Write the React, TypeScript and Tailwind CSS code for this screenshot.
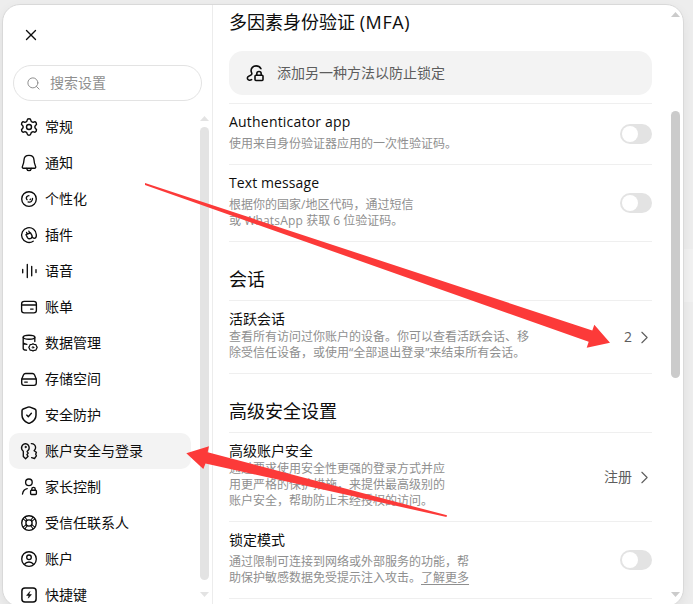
import type { ReactNode } from "react";
import { ChevronRight, Search, Settings, X } from "lucide-react";

type NavItem = {
  label: string;
  icon: ReactNode;
  active?: boolean;
};

function Glyph({ children }: { children: ReactNode }) {
  return (
    <svg
      viewBox="0 0 18 18"
      width={18}
      height={18}
      fill="none"
      stroke="currentColor"
      strokeWidth={1.35}
      strokeLinecap="round"
      strokeLinejoin="round"
      className="shrink-0"
    >
      {children}
    </svg>
  );
}

const BellIcon = () => (
  <Glyph>
    <path d="M9 1.3C6 1.3 4.1 3.4 4 6.1c-.1 2.7-.7 4.400-1.600 6.400-.4.9.1 1.700 1 1.700h11.200c.9 0 1.400-.8 1-1.700-.9-2-1.500-3.700-1.600-6.400C13.900 3.400 12 1.300 9 1.300Z" />
    <path d="M6.500 14.400c.3 1.400 1.200 2.200 2.500 2.200s2.200-.8 2.500-2.200" />
  </Glyph>
);

const PersonalizeIcon = () => (
  <Glyph>
    <circle cx="9" cy="9" r="7.3" />
    <path d="M8.900 5.700C7 5.900 6 7.200 6.400 8.700c.1.500.4.800.7 1" />
    <path d="M12.500 8.400c.2 2.700-2 4.400-4.400 3.500M10.500 9.100l-.4.500" />
  </Glyph>
);

const PluginIcon = () => (
  <Glyph>
    <path d="M13.200 15.200A7.400 7.400 0 1 1 16.400 9c0 2.100-.8 3.300-2.200 3.300-.9 0-1.500-.4-1.900-1.100" />
    <path d="M6 8.700 10.500 6.800l1.400 2.500c.5 1.300.1 2.500-1 3.100-1.200.6-2.700.3-3.400-.8L6 8.700ZM7.200 8 6.600 6.400M9.600 6.900 8.900 5.200" />
  </Glyph>
);

const VoiceIcon = () => (
  <Glyph>
    <path d="M2.700 7.400v3.400M7.300 2.500v13M11.700 4.500v9.200M16 7.600v2.900" />
  </Glyph>
);

const CardIcon = () => (
  <Glyph>
    <rect x="1.6" y="3.3" width="14.8" height="11.5" rx="2.6" />
    <path d="M1.8 7h14.4M10.6 11.1h2.5" />
  </Glyph>
);

const DataIcon = () => (
  <Glyph>
    <ellipse cx="9" cy="3.2" rx="5.8" ry="2" />
    <path d="M3.2 3.2v11.2c0 .9 1.3 1.6 3.3 1.8M14.8 3.2v4.3M3.2 8.800c.2.7 1.600 1.300 3.700 1.500" />
    <path d="m13 9.700 1.300.8 1.500.1.700 1.500.7 1.300-.7 1.300-.7 1.500-1.500.1-1.300.8-1.300-.8-1.500-.1-.7-1.500-.7-1.300.7-1.300.7-1.500 1.500-.1Z" strokeWidth={1.2} />
    <circle cx="13" cy="13.4" r=".8" strokeWidth={1} />
  </Glyph>
);

const StorageIcon = () => (
  <Glyph>
    <path d="M1.7 9.8v3.300c0 1.400 1 2.300 2.300 2.300h10c1.300 0 2.300-.9 2.300-2.300V9.800c0-.6-.1-.9-.3-1.400l-1.400-3.300c-.4-1-1.100-1.600-2.200-1.600H5.600c-1.100 0-1.800.6-2.200 1.600L2 8.400c-.2.5-.3.8-.3 1.400Z" />
    <path d="M1.900 9h14.200M4.700 12.100h2.600" />
  </Glyph>
);

const ShieldIcon = () => (
  <Glyph>
    <path
      d="M9 .9c.4 0 .7.1 1 .2l4.800 1.900c.8.3 1.200.9 1.200 1.700v4.500c0 3.500-2.100 6-6.200 7.900-.5.2-1.100.2-1.600 0C4.100 15.200 2 12.700 2 9.200V4.700c0-.8.4-1.400 1.200-1.700L8 1.100c.3-.1.600-.2 1-.2Z"
      strokeWidth={1.5}
    />
    <path d="m6.700 9.100 1.600 1.600 3.100-3.400" />
  </Glyph>
);

const KeysIcon = () => (
  <Glyph>
    <path d="M5.700 1.600a4.200 4.200 0 0 0-2.400 7.600v5.300l2.300 2.200 2.500-2.400-1.200-1.600 1.300-1.600-1.100-1.500.1-.3A4.200 4.200 0 0 0 5.700 1.600Z" />
    <circle cx="5.600" cy="5" r=".7" fill="currentColor" strokeWidth={0.8} />
    <path d="M11.300 1.600c2.700 0 4.500 1.900 4.300 4.300-.1 1.300-.8 2.100-1.500 2.900l2.300 1.500-.7 1.900.7 1.600-1.900 2.700-2.900-.8" />
  </Glyph>
);

const ParentIcon = () => (
  <Glyph>
    <circle cx="8.900" cy="4.300" r="3.300" />
    <path d="M2.500 16c.5-2.800 2.200-4.900 4.700-5.300" />
    <rect x="10.600" y="12.200" width="5.800" height="4.300" rx=".9" />
    <path d="M11.800 12v-1a1.700 1.700 0 0 1 3.400 0v1" />
  </Glyph>
);

const ContactIcon = () => (
  <Glyph>
    <circle cx="9" cy="9" r="7.300" />
    <circle cx="9" cy="9" r="3.100" />
    <path
      d="M3.100 4.900 6.300 7.300M4.900 3.100l2.300 3.200M13.100 3.100l-2.300 3.200M14.900 4.900l-3.200 2.400M3.100 13.100l3.200-2.400M4.900 14.900l2.300-3.200M13.100 14.900l-2.300-3.200M14.900 13.100l-3.200-2.400"
      strokeWidth={1.05}
    />
  </Glyph>
);

const AccountIcon = () => (
  <Glyph>
    <circle cx="9" cy="9" r="7.300" />
    <circle cx="9" cy="7.300" r="2.300" />
    <path d="M4.600 14.200c1-1.500 2.500-2.200 4.400-2.200s3.400.7 4.400 2.200" />
  </Glyph>
);

const ShortcutIcon = () => (
  <Glyph>
    <rect x="1.900" y="1.900" width="14.200" height="14.200" rx="3" strokeWidth={1.5} />
    <path d="M9.700 5.800 6.600 9.400H9l-.7 2.800 3.100-3.600H9Z" fill="currentColor" strokeWidth={0.6} />
  </Glyph>
);

const KeyLockIcon = () => (
  <Glyph>
    <g strokeWidth={1.6}>
      <path d="M5.600 15.600c-1.300.9-3.200.9-3.900-.4-.7-1.400.1-2.800 1.500-3.300 1.300-.4 2.400-.8 2.600-1.800.2-.9-.6-1.800-.7-3.100-.2-3 2-5.100 4.900-5.100 2.300 0 3.900 1 4.900 2.800" />
      <rect x="9" y="11.300" width="8" height="5.200" rx=".9" />
      <path d="M10.800 11V9.700a2.200 2.200 0 0 1 4.400 0V11" />
    </g>
  </Glyph>
);

const NAV: NavItem[] = [
  { label: "常规", icon: <Settings size={20} strokeWidth={1.7} className="-mx-px shrink-0" /> },
  { label: "通知", icon: <BellIcon /> },
  { label: "个性化", icon: <PersonalizeIcon /> },
  { label: "插件", icon: <PluginIcon /> },
  { label: "语音", icon: <VoiceIcon /> },
  { label: "账单", icon: <CardIcon /> },
  { label: "数据管理", icon: <DataIcon /> },
  { label: "存储空间", icon: <StorageIcon /> },
  { label: "安全防护", icon: <ShieldIcon /> },
  { label: "账户安全与登录", icon: <KeysIcon />, active: true },
  { label: "家长控制", icon: <ParentIcon /> },
  { label: "受信任联系人", icon: <ContactIcon /> },
  { label: "账户", icon: <AccountIcon /> },
  { label: "快捷键", icon: <ShortcutIcon /> },
];

function ScrollArrow({ down, className }: { down?: boolean; className: string }) {
  return (
    <svg width={9} height={5} viewBox="0 0 9 5" className={className}>
      <path d={down ? "M0 0h9L4.5 5Z" : "M0 5h9L4.5 0Z"} fill="currentColor" />
    </svg>
  );
}

function Sidebar() {
  return (
    <aside className="flex w-[210px] shrink-0 flex-col border-r border-[#ececec]">
      <button type="button" className="mt-[22px] ml-[20px] flex size-4 items-center justify-center">
        <X size={18} strokeWidth={1.8} className="shrink-0" />
      </button>
      <div className="mt-[22px] ml-[10px] flex h-9 w-[189px] items-center gap-[9px] rounded-full border border-[#e3e3e3] pl-[12px] text-[#8f8f8f]">
        <Search size={15} strokeWidth={1.6} />
        <span className="text-sm leading-5">搜索设置</span>
      </div>
      <div className="mt-2 flex min-h-0 flex-1">
        <nav className="ml-[6px] w-[182px] shrink-0 overflow-hidden">
          {NAV.map((item) => (
            <div
              key={item.label}
              className={`flex h-9 items-center gap-[7px] rounded-[10px] pl-[11px] text-sm ${
                item.active ? "bg-[#f3f3f3]" : ""
              }`}
            >
              {item.icon}
              <span className="whitespace-nowrap">{item.label}</span>
            </div>
          ))}
        </nav>
        <div className="mt-[7px] ml-[9px] flex w-[9px] flex-col text-[#e3e3e3]">
          <ScrollArrow className="shrink-0" />
          <div className="mt-[6px] h-[453px] rounded-full bg-[#e3e3e3]" />
          <ScrollArrow down className="mt-[12px] shrink-0" />
        </div>
      </div>
    </aside>
  );
}

function Toggle() {
  return (
    <span className="flex h-5 w-8 shrink-0 items-center rounded-full bg-[#e3e3e3] px-0.5">
      <span className="size-4 rounded-full bg-white" />
    </span>
  );
}

function Value({ children }: { children: ReactNode }) {
  return (
    <span className="flex shrink-0 items-center gap-0.5 text-sm text-[#5d5d5d]">
      {children}
      <ChevronRight size={21} strokeWidth={1.3} className="-mr-[3px]" />
    </span>
  );
}

function Row({
  title,
  desc,
  tight,
  control,
}: {
  title: ReactNode;
  desc: ReactNode;
  tight?: boolean;
  control: ReactNode;
}) {
  return (
    <div className="flex items-center justify-between border-t border-[#efefef]">
      <div className="pt-2 pb-3">
        <h3 className="text-sm leading-5">{title}</h3>
        <p
          className={`text-xs leading-4 whitespace-nowrap text-[#8f8f8f] ${tight ? "" : "mt-1"}`}
        >
          {desc}
        </p>
      </div>
      {control}
    </div>
  );
}

function SectionTitle({ children }: { children: ReactNode }) {
  return (
    <h2 className="border-t border-[#efefef] pt-[25px] pb-[9px] text-lg leading-6">{children}</h2>
  );
}

function Content() {
  return (
    <main className="ml-4 w-[423px] shrink-0 pt-[5px]">
      <h2 className="text-lg leading-6">
        多因素身份验证 <span className="tracking-[0.6px]">(MFA)</span>
      </h2>
      <div className="mt-[17px] mb-2 flex h-11 items-center gap-[13px] rounded-[14px] bg-[#f3f3f3] pl-[17px]">
        <KeyLockIcon />
        <span className="text-sm text-[#5d5d5d]">添加另一种方法以防止锁定</span>
      </div>
      <Row
        title={<span className="tracking-[0.2px]">Authenticator app</span>}
        desc="使用来自身份验证器应用的一次性验证码。"
        control={<Toggle />}
      />
      <Row
        title={<span className="tracking-[0.1px]">Text message</span>}
        desc={
          <>
            根据你的国家/地区代码，通过短信
            <br />或 <span className="tracking-[0.2px]">WhatsApp</span> 获取 6 位验证码。
          </>
        }
        control={<Toggle />}
      />
      <SectionTitle>会话</SectionTitle>
      <Row
        tight
        title="活跃会话"
        desc={
          <>
            查看所有访问过你账户的设备。你可以查看活跃会话、移
            <br />
            除受信任设备，或使用“全部退出登录”来结束所有会话。
          </>
        }
        control={<Value>2</Value>}
      />
      <SectionTitle>高级安全设置</SectionTitle>
      <Row
        tight
        title="高级账户安全"
        desc={
          <>
            通过要求使用安全性更强的登录方式并应
            <br />
            用更严格的保护措施，来提供最高级别的
            <br />
            账户安全，帮助防止未经授权的访问。
          </>
        }
        control={<Value>注册</Value>}
      />
      <Row
        title="锁定模式"
        desc={
          <>
            通过限制可连接到网络或外部服务的功能，帮
            <br />
            助保护敏感数据免受提示注入攻击。
            <span className="underline underline-offset-2">了解更多</span>
          </>
        }
        control={<Toggle />}
      />
      <div className="border-t border-[#efefef]" />
    </main>
  );
}

export default function App() {
  return (
    <div
      lang="zh-CN"
      className="relative h-[604px] w-[693px] overflow-hidden bg-[#ededed] pt-[4px] pl-[2px] font-['Open_Sans','Noto_Sans_CJK_SC',sans-serif] text-[#0d0d0d]"
    >
      <div className="absolute top-[249px] right-0 h-[53px] w-4 bg-[#f1f1f1]" />
      <div className="relative flex h-[603px] w-[682px] overflow-hidden rounded-[18px] border border-[#d9d9d9] bg-white shadow-[0_4px_12px_rgba(0,0,0,0.06)]">
        <Sidebar />
        <Content />
        <div className="mt-[7px] ml-[19px] flex w-[9px] flex-col text-[#cbcbcb]">
          <ScrollArrow className="shrink-0" />
          <div className="mt-[94px] h-[267px] rounded-full bg-[#cbcbcb]" />
          <ScrollArrow down className="mt-[214px] shrink-0" />
        </div>
      </div>
      {/* annotation arrows over the dialog */}
      <svg
        viewBox="0 0 693 604"
        width={693}
        height={604}
        className="pointer-events-none absolute inset-0"
        fill="#fc3a39"
      >
        <path d="M145 183 592.3 330.5 594.3 324.8 610 342.7 586.7 347.7 588.7 341.8 145 185Z" />
        <path d="M186.3 453.3 209 446.3 207.700 452.300 447 515.300 446.500 517 205.500 463.500 203.300 469Z" />
      </svg>
    </div>
  );
}
